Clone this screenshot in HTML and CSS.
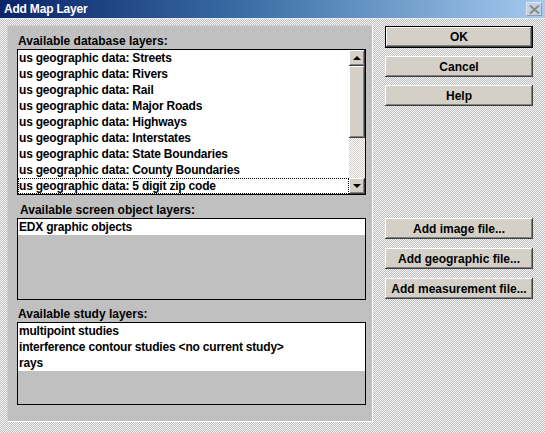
FILE: index.html
```html
<!DOCTYPE html>
<html>
<head>
<meta charset="utf-8">
<link rel="stylesheet" href="styles.css">
</head>
<body>
<div class="window">
  <div class="titlebar">
    <span class="title">Add Map Layer</span>
    <span class="close"><svg width="11" height="9" viewBox="0 0 11 9"><path d="M1 0.5 L10 8.5 M10 0.5 L1 8.5" stroke="#8a8a8a" stroke-width="2"/></svg></span>
  </div>
  <div class="content">
    <div class="panel">
      <div class="label l1">Available database layers:</div>
      <div class="list list1">
        <div class="items">
          <div class="item">us geographic data: Streets</div>
          <div class="item">us geographic data: Rivers</div>
          <div class="item">us geographic data: Rail</div>
          <div class="item">us geographic data: Major Roads</div>
          <div class="item">us geographic data: Highways</div>
          <div class="item">us geographic data: Interstates</div>
          <div class="item">us geographic data: State Boundaries</div>
          <div class="item">us geographic data: County Boundaries</div>
          <div class="item focus">us geographic data: 5 digit zip code</div>
        </div>
        <div class="scrollbar">
          <div class="sbtn"><span class="arrow up"></span></div>
          <div class="thumb"></div>
          <div class="track"></div>
          <div class="sbtn"><span class="arrow down"></span></div>
        </div>
      </div>
      <div class="label l2">Available screen object layers:</div>
      <div class="list list2">
        <div class="items white">
          <div class="item">EDX graphic objects</div>
        </div>
      </div>
      <div class="label l3">Available study layers:</div>
      <div class="list list3">
        <div class="items white">
          <div class="item">multipoint studies</div>
          <div class="item">interference contour studies &lt;no current study&gt;</div>
          <div class="item">rays</div>
        </div>
      </div>
    </div>
    <div class="side">
      <div class="btngroup top">
        <button class="btn default">OK</button>
        <button class="btn">Cancel</button>
        <button class="btn">Help</button>
      </div>
      <div class="btngroup bottom">
        <button class="btn">Add image file...</button>
        <button class="btn">Add geographic file...</button>
        <button class="btn">Add measurement file...</button>
      </div>
    </div>
  </div>
</div>
</body>
</html>
```
FILE: styles.css
```css
* { box-sizing: border-box; }
html, body { margin: 0; padding: 0; }
body {
  width: 545px;
  height: 433px;
  overflow: hidden;
  font-family: "Liberation Sans", Arial, sans-serif;
  font-weight: bold;
  font-size: 12px;
  color: #000;
}
.window {
  width: 545px;
  height: 433px;
  background-color: #d8d8d8;
  background-image: repeating-conic-gradient(#c0c0c0 0 25%, #f4f4f4 0 50%);
  background-size: 2px 2px;
}
.titlebar {
  height: 19px;
  background: linear-gradient(to right, #0a246a, #3a6ea5 45%, #a6caf0);
  display: flex;
  align-items: center;
  justify-content: space-between;
  padding: 0 3px 0 4px;
  border-bottom: 1px solid #e8ecf4;
}
.title {
  color: #fff;
  font-family: "Liberation Sans", Arial, sans-serif;
  font-size: 12px;
  font-weight: bold;
  letter-spacing: -0.2px;
}
.close {
  width: 16px;
  height: 14px;
  background: #c6d2e2;
  border: 1px solid #dde6f2;
  border-right-color: #8c9cb4;
  border-bottom-color: #8c9cb4;
  display: flex;
  align-items: center;
  justify-content: center;
}
.content {
  display: flex;
  padding: 6px 0 0 7px;
}
.panel {
  width: 366px;
  height: 397px;
  background: #c0c0c0;
  border: 1px solid #e0e0e0;
  border-top-color: #d0d0d0;
  border-left-color: #d0d0d0;
  border-right-color: #ffffff;
  border-bottom-color: #ffffff;
  padding: 0 0 0 9px;
}
.label {
  height: 16px;
  line-height: 16px;
  padding-left: 1px;
}
.l1 { margin-top: 7px; height: 16px; }
.l2 { margin-top: 7px; padding-left: 3px; }
.l3 { margin-top: 6px; }
.list {
  width: 349px;
  border: 1px solid #000;
  display: flex;
  background: #c0c0c0;
}
.list1 { height: 146px; background: #fff; }
.list2 { height: 82px; }
.list3 { height: 83px; }
.items {
  flex: 1;
  display: flex;
  flex-direction: column;
}
.white .item { background: #fff; }
.item {
  height: 16px;
  line-height: 16px;
  padding-left: 1px;
  white-space: nowrap;
  letter-spacing: -0.2px;
}
.item.focus {
  outline: 1px dotted #000;
  outline-offset: -1px;
}
.scrollbar {
  width: 16px;
  display: flex;
  flex-direction: column;
}
.sbtn, .thumb {
  background: #d4d0c8;
  box-shadow: inset -1px -1px #404040, inset 1px 1px #fff, inset -2px -2px #808080;
}
.sbtn {
  height: 16px;
  display: flex;
  align-items: center;
  justify-content: center;
}
.thumb { height: 72px; }
.track {
  flex: 1;
  background-image: repeating-conic-gradient(#d4d0c8 0 25%, #ffffff 0 50%);
  background-size: 2px 2px;
}
.arrow {
  width: 0;
  height: 0;
  border-left: 4px solid transparent;
  border-right: 4px solid transparent;
}
.arrow.up { border-bottom: 4px solid #000; }
.arrow.down { border-top: 4px solid #000; }
.side {
  margin-left: 12px;
  width: 148px;
  display: flex;
  flex-direction: column;
}
.btngroup {
  display: flex;
  flex-direction: column;
  gap: 8px;
}
.btngroup.top { margin-top: 1px; }
.btngroup.bottom { margin-top: 112px; gap: 9px; }
.btn {
  height: 21px;
  width: 148px;
  background: #d4d0c8;
  border: none;
  font-family: "Liberation Sans", Arial, sans-serif;
  font-weight: bold;
  font-size: 12px;
  color: #000;
  padding: 0;
  box-shadow: inset -1px -1px #404040, inset 1px 1px #fff, inset -2px -2px #808080;
}
.btn.default {
  height: 22px;
  box-shadow: inset 0 0 0 1px #000, inset -2px -2px #404040, inset 2px 2px #fff, inset -3px -3px #808080;
}
```
